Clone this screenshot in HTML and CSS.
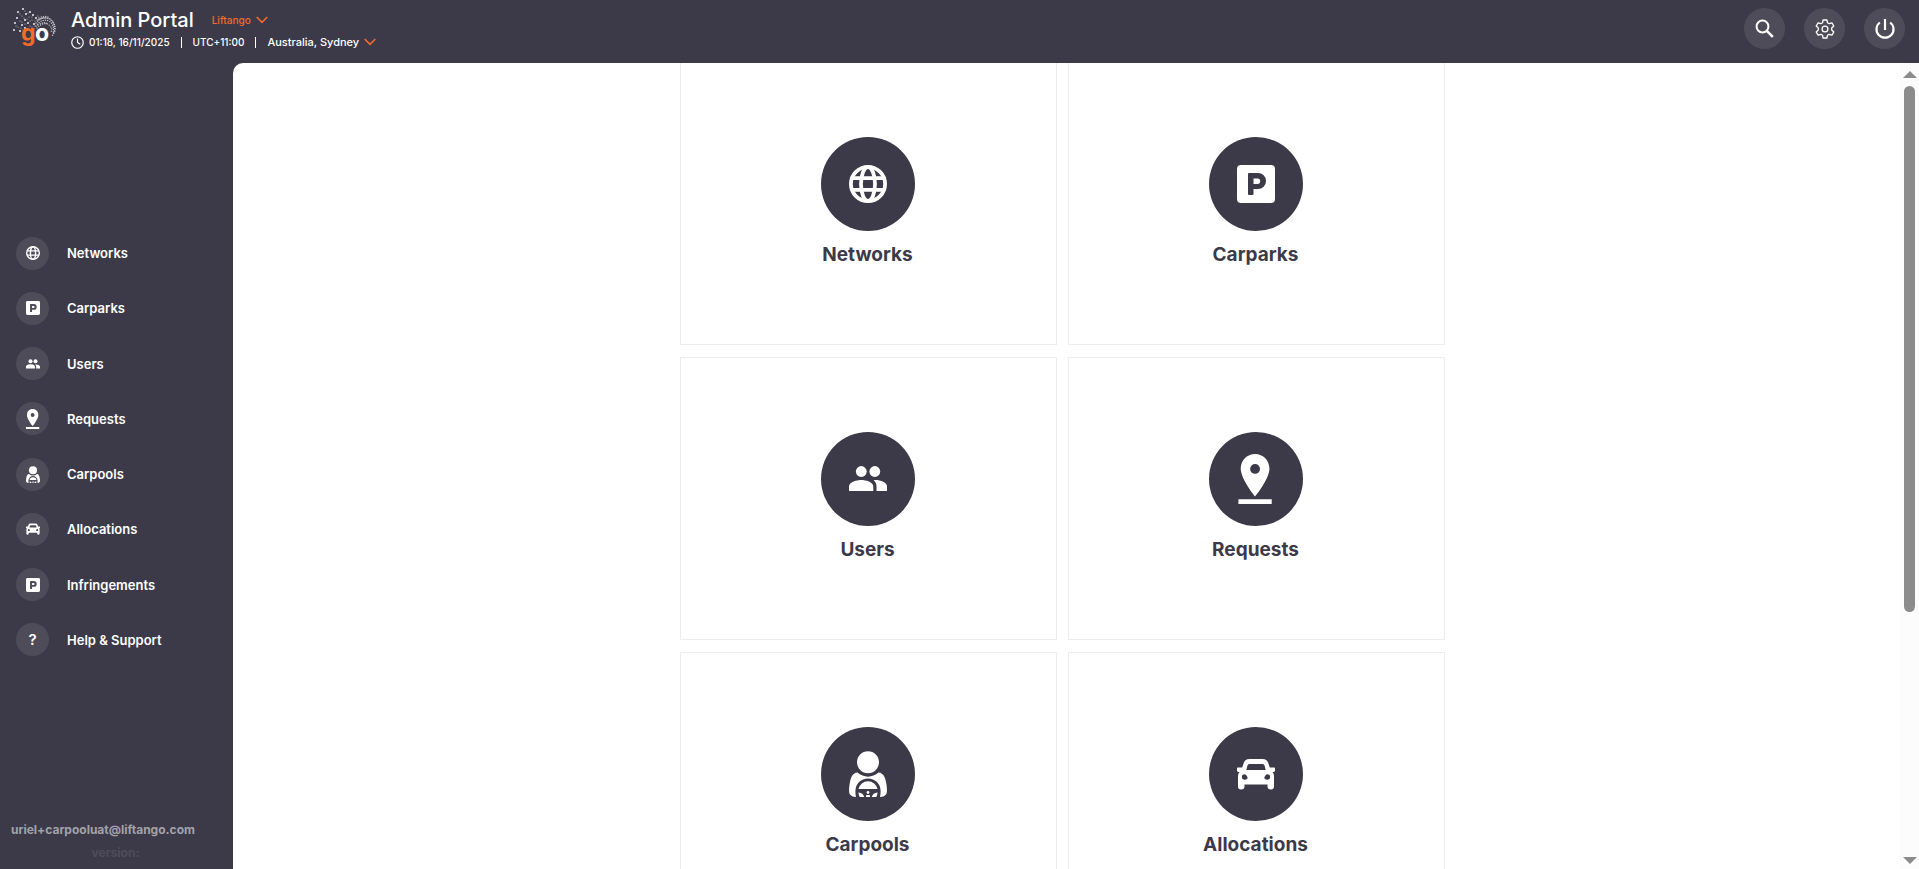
FILE: index.html
```html
<!DOCTYPE html>
<html lang="en">
<head>
    <meta charset="utf-8">
    <title>Admin Portal</title>
    <link rel="stylesheet" href="styles.css">
</head>
<body>
    <!-- Shared icons -->
    <svg class="sprite" aria-hidden="true">
        <symbol id="icon-globe" viewBox="0 0 38 38">
            <g fill="none" stroke="currentColor" stroke-width="3.8">
                <circle cx="19" cy="19" r="17.1"/>
                <ellipse cx="19" cy="19" rx="7" ry="17"/>
                <path d="M3 13.2h32M3 24.8h32"/>
            </g>
        </symbol>
        <symbol id="icon-parking" viewBox="0 0 38 38">
            <path fill="currentColor" fill-rule="evenodd" d="M4 0h30a4 4 0 0 1 4 4v30a4 4 0 0 1-4 4H4a4 4 0 0 1-4-4V4a4 4 0 0 1 4-4zM12 8a1 1 0 0 0-1 1v20a1 1 0 0 0 1 1h3.500a1 1 0 0 0 1-1v-5H21a8 8 0 0 0 0-16zM16.500 13.500H20.500a2.700 2.700 0 0 1 0 5.400H16.500z"/>
        </symbol>
        <symbol id="icon-users" viewBox="0 0 38 38">
            <g fill="currentColor">
                <circle cx="12.300" cy="11.500" r="5.400"/>
                <circle cx="25.800" cy="11.500" r="5.400"/>
                <path d="M0 31v-4.500c0-4.500 8-6.500 12.300-6.500s12 2 12 6.500V31zM24.700 20.200c5.500-.6 13.300 1.800 13.300 6.300V31H27.500v-4.500c0-2.800-1-4.800-2.800-6.300z"/>
            </g>
        </symbol>
        <symbol id="icon-pin" viewBox="0 0 38 54">
            <path fill="currentColor" fill-rule="evenodd" d="M18 0C9 0 2.500 7 2.500 16 2.500 27 18 46 18 46S33.500 27 33.500 16C33.500 7 27 0 18 0zm0 10.800a5.300 5.300 0 1 1 0 10.600 5.300 5.300 0 0 1 0-10.600zM0 49h36v5H0z"/>
        </symbol>
        <symbol id="icon-driver" viewBox="0 0 38 46">
            <circle fill="currentColor" cx="19" cy="11.300" r="11"/>
            <path fill="currentColor" d="M8.500 21.500c6 5.500 15 5.500 21 0 5 .5 6.500 4.500 7.500 9.500 1 5 1.500 10.500 0 12.500-1.200 1.700-3.500 2.500-6 2.500.5-2 .6-4 .6-6A12.600 12.600 0 0 0 6.400 40c0 2 .1 4 .6 6-2.500 0-4.800-.8-6-2.500-1.500-2-1-7.500 0-12.500 1-5 2.500-9 7.500-9.500z"/>
            <path fill="currentColor" d="M9.500 38a9.700 9.700 0 0 1 19 0zM9.500 41.500c3 .2 5 1.800 5.800 4.500h-4.500c-.9-1.300-1.300-3-1.300-4.500zM28.500 41.500c-3 .2-5 1.800-5.800 4.500h4.500c.9-1.300 1.300-3 1.300-4.500zM17.300 44h3.400l.4 2h-4.200z"/>
            <circle fill="currentColor" cx="19" cy="41.500" r="1.400"/>
        </symbol>
        <symbol id="icon-car" viewBox="0 0 38 38">
            <path fill="currentColor" fill-rule="evenodd" d="M12.500 4h13c3 0 4.800 1.200 5.800 4l1.500 4.500H37.200a.8.8 0 0 1 .8.800v2.200c0 .9-.7 1.500-1.500 1.500H35.500c1 1.300 1.500 2.800 1.500 4.500V31.500c0 2-.9 3-3.200 3s-3.300-1-3.300-3V29.500h-23v2c0 2-1 3-3.300 3s-3.200-1-3.200-3V21.500c0-1.700.5-3.200 1.500-4.500H1.500C.7 17 0 16.400 0 15.500v-2.200a.8.8 0 0 1 .8-.8h4.400L6.700 8c1-2.800 2.800-4 5.800-4zM12.800 9c-1.300 0-2 .5-2.400 1.700L9.300 15h19.400l-1.100-4.300C27.200 9.500 26.500 9 25.200 9zM7.600 19.300a2.700 2.700 0 1 0 0 5.400c1.600 0 3-.7 3-1.700s-1.300-3.700-3-3.700zM30.400 19.300c-1.700 0-3 2.700-3 3.700s1.400 1.700 3 1.700a2.700 2.700 0 1 0 0-5.400z"/>
        </symbol>
        <symbol id="icon-chevron" viewBox="0 0 12 8">
            <path fill="none" stroke="currentColor" stroke-width="1.600" d="M.7 1l5.300 5.400L11.300 1"/>
        </symbol>
    </svg>

    <header class="topbar">
        <svg class="logo" viewBox="0 0 46 42" role="img" aria-label="Go">
            <!-- zero length segments give round dots -->
            <path class="logo-dots" d="M11 1h0M6 4h0M14 6h0M18 4h0M5 10h0M3 15h0M13 12h0M21 7h0M2 22h0M10 17h0M16 15h0M24 10h0M8 23h0M13 20h0M22 16h0"/>
            <path class="logo-dots small" d="M8 6h0M10 8h0M13 3h0M16 5h0M17 9h0M12 10h0M8 13h0M6 19h0M10 14h0M15 11h0M18 13h0M20 9h0M23 13h0M26 8h0M4 18h0M9 20h0M13 16h0M18 18h0M20 12h0M25 12h0M11 22h0M20 19h0M23 18h0M27 11h0"/>
            <g class="logo-mesh">
                <path d="M24 15q6-8 14-4 6 4 5 12l-3 5"/>
                <path d="M24 18q6-8 13-5 6 4 4 12"/>
                <path d="M26 12q8-4 13 0 6 6 2 15"/>
                <path d="M25 20q7-7 12-3 4 3 2 7"/>
                <path d="M26 17q6-4 10-1"/>
                <path d="M27 10q6-3 11 0"/>
            </g>
            <text class="logo-g" x="9" y="33">g</text>
            <text class="logo-o" x="23" y="33">o</text>
        </svg>
        <div class="heading">
            <div class="heading-row">
                <h1>Admin Portal</h1>
                <button class="picker client">Liftango <svg><use href="#icon-chevron"/></svg></button>
            </div>
            <div class="clock-row">
                <svg class="clock" viewBox="0 0 14 14" fill="none" stroke="currentColor" stroke-width="1.300">
                    <circle cx="7" cy="7" r="6.200"/>
                    <path d="M7 2.800V7l3 2"/>
                </svg>
                <span>01:18, 16/11/2025</span>
                <span class="separator"></span>
                <span>UTC+11:00</span>
                <span class="separator"></span>
                <button class="picker timezone">Australia, Sydney <svg><use href="#icon-chevron"/></svg></button>
            </div>
        </div>
        <div class="actions">
            <button class="round-button" aria-label="Search">
                <svg viewBox="0 0 20 20" fill="none" stroke="currentColor" stroke-width="2">
                    <circle cx="7.500" cy="7.500" r="5.900"/>
                    <path d="M11.800 11.800l6 6" stroke-width="2.600"/>
                </svg>
            </button>
            <button class="round-button" aria-label="Settings">
                <svg viewBox="0 0 20 20" fill="none" stroke="currentColor" stroke-width="1.300" stroke-linejoin="round">
                    <circle cx="10" cy="10" r="2.900"/>
                    <path d="M8.100 1h3.800l.6 2.800 1.600.9 2.800-.9 1.900 3.300-2.100 1.900v2l2.100 1.900-1.900 3.300-2.800-.9-1.600.9-.6 2.800H8.100l-.6-2.800-1.600-.9-2.800.9-1.900-3.300L3.300 11V9L1.200 7.100l1.900-3.300 2.800.9 1.600-.9z"/>
                </svg>
            </button>
            <button class="round-button" aria-label="Log out">
                <svg viewBox="0 0 20 20" fill="none" stroke="currentColor" stroke-width="2.200">
                    <path d="M10 0v11M4.800 3.500a8.500 8.500 0 1 0 10.400 0"/>
                </svg>
            </button>
        </div>
    </header>

    <div class="layout">
        <aside class="sidebar">
            <nav class="menu">
                <a href="#"><span class="badge"><svg><use href="#icon-globe"/></svg></span>Networks</a>
                <a href="#"><span class="badge"><svg><use href="#icon-parking"/></svg></span>Carparks</a>
                <a href="#"><span class="badge"><svg><use href="#icon-users"/></svg></span>Users</a>
                <a href="#"><span class="badge"><svg class="tall"><use href="#icon-pin"/></svg></span>Requests</a>
                <a href="#"><span class="badge"><svg class="medium"><use href="#icon-driver"/></svg></span>Carpools</a>
                <a href="#"><span class="badge"><svg><use href="#icon-car"/></svg></span>Allocations</a>
                <a href="#"><span class="badge"><svg><use href="#icon-parking"/></svg></span>Infringements</a>
                <a href="#"><span class="badge">?</span>Help &amp; Support</a>
            </nav>
            <footer class="account">
                <div class="email">uriel+carpooluat@liftango.com</div>
                <div class="version">version:</div>
            </footer>
        </aside>

        <main class="content">
            <div class="cards">
                <a class="card" href="#"><span class="card-icon"><svg><use href="#icon-globe"/></svg></span>Networks</a>
                <a class="card" href="#"><span class="card-icon"><svg><use href="#icon-parking"/></svg></span>Carparks</a>
                <a class="card" href="#"><span class="card-icon"><svg><use href="#icon-users"/></svg></span>Users</a>
                <a class="card" href="#"><span class="card-icon"><svg class="tall"><use href="#icon-pin"/></svg></span>Requests</a>
                <a class="card" href="#"><span class="card-icon"><svg class="medium"><use href="#icon-driver"/></svg></span>Carpools</a>
                <a class="card" href="#"><span class="card-icon"><svg><use href="#icon-car"/></svg></span>Allocations</a>
            </div>
            <div class="scrollbar" aria-hidden="true">
                <span class="arrow up"></span>
                <span class="track"><span class="thumb"></span></span>
                <span class="arrow down"></span>
            </div>
        </main>
    </div>
</body>
</html>
```

FILE: styles.css
```css
* {
    box-sizing: border-box;
}
body {
    margin: 0;
    height: 100vh;
    display: flex;
    flex-direction: column;
    overflow: hidden;
    background-color: #3c3a48;
    color: #fff;
    font-family: Inter, sans-serif;
}
a {
    color: inherit;
    text-decoration: none;
}
button {
    padding: 0;
    border: 0;
    background: none;
    color: inherit;
    font: inherit;
    cursor: pointer;
}
.sprite {
    display: none;
}

/* Top bar */
.topbar {
    display: flex;
    align-items: flex-start;
    height: 63px;
    padding: 8px 14px 0 12px;
}
.logo {
    width: 46px;
    height: 42px;
    margin-right: 13px;
}
.logo text {
    font-size: 23px;
    font-weight: 700;
}
.logo-g {
    fill: #f26a2c;
}
.logo-o {
    fill: #fff;
}
.logo-dots,
.logo-mesh {
    fill: none;
    stroke: #fff;
    stroke-linecap: round;
    stroke-width: 1.8;
}
.small {
    stroke: #b9b8be;
    stroke-width: 1.2;
}
.logo-mesh {
    stroke: #c9c8cd;
    stroke-width: 1.4;
    stroke-dasharray: 0 2.3;
}
.heading-row {
    display: flex;
    align-items: center;
    gap: 18px;
    height: 24px;
}
h1 {
    margin: 0;
    font-size: 20px;
    font-weight: 500;
}
.picker {
    display: flex;
    align-items: center;
    gap: 5px;
}
.picker svg {
    width: 12px;
    height: 8px;
    color: #f26a2c;
}
.client {
    color: #f26a2c;
    font-size: 10px;
    font-weight: 500;
}
.clock-row {
    display: flex;
    align-items: center;
    height: 20px;
    font-size: 10px;
    font-weight: 500;
}
.timezone {
    font-size: 11px;
}
.clock {
    width: 13px;
    height: 13px;
    margin-right: 5px;
}
.separator {
    width: 1px;
    height: 11px;
    margin: 0 11px;
    background-color: #fff;
}
.actions {
    display: flex;
    gap: 19px;
    margin-left: auto;
}
.round-button {
    display: flex;
    align-items: center;
    justify-content: center;
    width: 41px;
    height: 41px;
    border-radius: 50%;
    background-color: #4e4c59;
}
.round-button svg {
    width: 20px;
    height: 20px;
}

/* Sidebar */
.layout {
    display: flex;
    flex: 1;
    min-height: 0;
}
.sidebar {
    display: flex;
    flex-direction: column;
    flex: none;
    width: 233px;
    padding: 12px 11px 5px;
}
.menu {
    display: flex;
    flex-direction: column;
    justify-content: space-between;
    height: 420px;
    margin: auto 5px;
    font-size: 13px;
    font-weight: 600;
}
.menu a {
    display: flex;
    align-items: center;
    gap: 18px;
}
.badge {
    display: flex;
    align-items: center;
    justify-content: center;
    width: 33px;
    height: 33px;
    border-radius: 50%;
    background-color: #4e4c59;
    font-size: 15px;
}
.badge svg {
    width: 14px;
    height: 14px;
}
.badge .medium {
    height: 17px;
}
.badge .tall {
    height: 20px;
}
.account {
    font-weight: 700;
    font-size: 12px;
    line-height: 23px;
}
.email {
    color: #a3a2a8;
}
.version {
    padding-right: 2px;
    color: #4e4c59;
    text-align: center;
}

/* Cards */
.content {
    display: flex;
    flex: 1;
    overflow: hidden;
    border-top-left-radius: 10px;
    background-color: #fff;
    color: #3c3a48;
}
.cards {
    display: grid;
    grid-template-columns: repeat(2, 377px);
    grid-auto-rows: 283px;
    align-content: start;
    justify-content: center;
    gap: 12px 11px;
    flex: 1;
    margin-top: -1px;
    padding-right: 8px;
}
.card {
    display: flex;
    flex-direction: column;
    align-items: center;
    justify-content: center;
    gap: 12px;
    padding: 0 2px 4px 0;
    border: 1px solid #ededed;
    font-size: 19px;
    font-weight: 700;
    line-height: 24px;
}
.card-icon {
    display: flex;
    align-items: center;
    justify-content: center;
    width: 94px;
    height: 94px;
    border-radius: 50%;
    background-color: #3c3a48;
    color: #fff;
}
.card-icon svg {
    width: 38px;
    height: 38px;
}
.card-icon .medium {
    height: 46px;
}
.card-icon .tall {
    height: 50px;
}

/* Scrollbar */
.scrollbar {
    display: flex;
    flex-direction: column;
    align-items: center;
    gap: 8px;
    width: 19px;
    padding: 8px 0 5px;
    background-color: #fcfcfc;
}
.arrow {
    border: 7px solid transparent;
}
.up {
    border-top: 0;
    border-bottom-color: #8b8b8b;
}
.down {
    border-bottom: 0;
    border-top-color: #8b8b8b;
}
.track {
    flex: 1;
    width: 11px;
}
.thumb {
    display: block;
    height: 69%;
    border-radius: 6px;
    background-color: #8b8b8b;
}
```
